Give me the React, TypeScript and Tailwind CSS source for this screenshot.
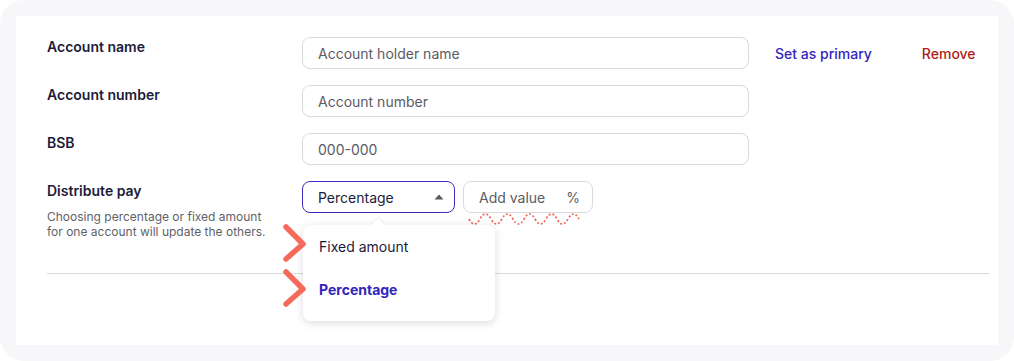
export default function App() {
  const rows = [
    { label: "Account name", placeholder: "Account holder name" },
    { label: "Account number", placeholder: "Account number" },
    { label: "BSB", placeholder: "000-000" },
  ];

  return (
    <div className="w-[1014px] h-[361px] bg-white font-['Inter',sans-serif]">
      <div className="w-[1014px] h-[361px] bg-[#f7f7f9] rounded-[24px] pt-4 pl-4 pr-4 pb-4">
        <div className="relative h-full bg-white pl-[31px] pr-[9px] pt-[21px]">
          {rows.map((r, i) => (
            <div key={r.label} className="flex items-start mb-4">
              <div className="w-[255px] text-[14px] leading-[20px] font-semibold text-[#1c1b3a]">
                {r.label}
              </div>
              <div className="w-[447px] h-[32px] rounded-[8px] border border-[#dadae0] flex items-center px-[15px] text-[14px] text-[#5b5b63]">
                {r.placeholder}
              </div>
              {i === 0 && (
                <div className="flex items-center h-[32px] text-[14px] font-medium">
                  <span className="ml-[26px] text-[#3324bb]">Set as primary</span>
                  <span className="ml-[50px] text-[#b01b16]">Remove</span>
                </div>
              )}
            </div>
          ))}

          {/* Distribute pay */}
          <div className="flex items-start">
            <div className="w-[255px]">
              <div className="text-[14px] leading-[20px] font-semibold text-[#1c1b3a]">
                Distribute pay
              </div>
              <p className="mt-[8px] text-[12px] leading-[15px] text-[#5f5f68]">
                Choosing percentage or fixed amount
                <br />
                for one account will update the others.
              </p>
            </div>
            <div className="w-[153px] h-[32px] rounded-[8px] border border-[#3a2cc0] flex items-center justify-between pl-[15px] pr-[10px] text-[14px] text-[#1c1b3a]">
              <span>Percentage</span>
              <svg width="10" height="6" viewBox="0 0 10 6">
                <path d="M5 0.5 L9.5 5.5 L0.5 5.5 Z" fill="#5a5a62" />
              </svg>
            </div>
            <div className="relative ml-2 w-[130px] h-[32px] rounded-[8px] border border-[#dadae0] flex items-center justify-between pl-[15px] pr-[12px] text-[14px] text-[#5b5b63]">
              <span>Add value</span>
              <span>%</span>
              <svg
                className="absolute left-[3px] top-[30px]"
                width="116"
                height="16"
                viewBox="0 0 116 16"
              >
                <path
                  d="M2 7 Q 7.5 17 13 7 T 24 7 T 35 7 T 46 7 T 57 7 T 68 7 T 79 7 T 90 7 T 101 7 T 112 7"
                  fill="none"
                  stroke="#f2665a"
                  strokeWidth="1.7"
                  strokeDasharray="2 2"
                />
              </svg>
            </div>
          </div>

          <div className="mt-[34px] h-px bg-[#dcdcdf]" />

          {/* Dropdown menu */}
          <div className="absolute left-[287px] top-[209px] w-[192px] h-[96px] bg-white rounded-[8px] shadow-[0_2px_10px_rgba(0,0,0,0.14)] text-[14px]">
            <div className="absolute -top-[5px] left-[70px] w-[10px] h-[10px] bg-white rotate-45 shadow-[-1px_-1px_2px_rgba(0,0,0,0.06)]" />
            <div className="relative pl-4 pt-[12px] leading-[20px] text-[#1c1b3a]">Fixed amount</div>
            <div className="relative pl-4 mt-[23px] leading-[20px] font-bold text-[#3324bb]">Percentage</div>
          </div>

          {/* annotation chevrons */}
          <svg className="absolute left-[266px] top-[207px]" width="26" height="40" viewBox="0 0 26 40">
            <path d="M4 4 L21 21 L4 36" fill="none" stroke="#f66a5c" strokeWidth="5.5" strokeLinecap="round" strokeLinejoin="round" />
          </svg>
          <svg className="absolute left-[266px] top-[252px]" width="26" height="40" viewBox="0 0 26 40">
            <path d="M4 4 L21 21 L4 36" fill="none" stroke="#f66a5c" strokeWidth="5.5" strokeLinecap="round" strokeLinejoin="round" />
          </svg>
        </div>
      </div>
    </div>
  );
}
